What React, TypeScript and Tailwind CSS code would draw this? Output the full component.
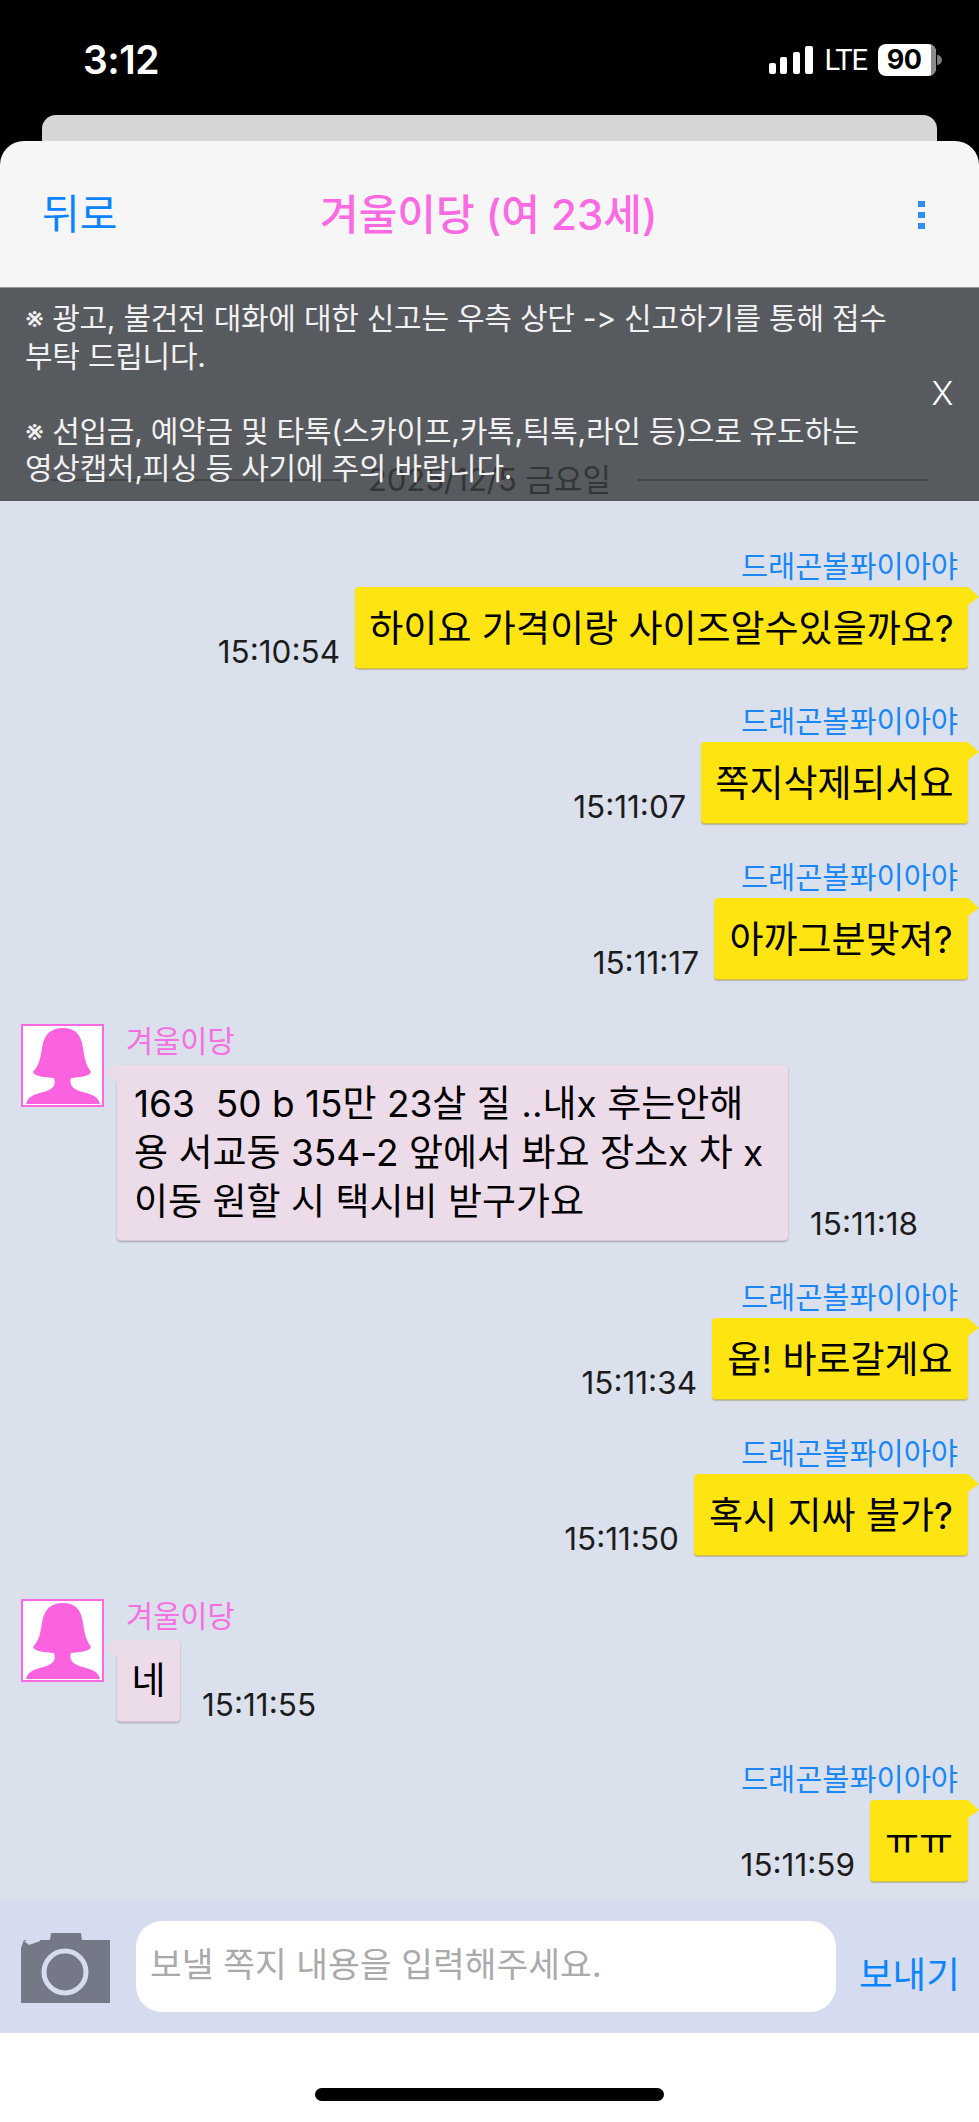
type Msg = { side: "me" | "her"; text: string; time: string; top: number; width: number };

const messages: Msg[] = [
  { side: "me", text: "하이요 가격이랑 사이즈알수있을까요?", time: "15:10:54", top: 47, width: 613 },
  { side: "me", text: "쪽지삭제되서요", time: "15:11:07", top: 31, width: 267 },
  { side: "me", text: "아까그분맞져?", time: "15:11:17", top: 32, width: 254 },
  { side: "her", text: "163  50 b 15만 23살 질 ..내x 후는안해\n용 서교동 354-2 앞에서 봐요 장소x 차 x\n이동 원할 시 택시비 받구가요", time: "15:11:18", top: 44, width: 671 },
  { side: "me", text: "옵! 바로갈게요", time: "15:11:34", top: 35, width: 256 },
  { side: "me", text: "혹시 지싸 불가?", time: "15:11:50", top: 32, width: 274 },
  { side: "her", text: "네", time: "15:11:55", top: 43, width: 63 },
  { side: "me", text: "ㅠㅠ", time: "15:11:59", top: 36, width: 98 },
];

function Avatar() {
  return (
    <div className="w-[83px] h-[83px] shrink-0 border-2 border-[#fb6ae2] bg-white">
      <svg viewBox="0 0 83 83" className="block -m-[2px]" style={{ width: 83, height: 83 }}>
        <path
          fill="#fb62e0"
          d="M42 4C30 4 23 10 21 24C19 38 17 42 12 48C14 53 24 53 33 54C35 60 33 64 26 67C16 70 7 71 5 80L79 80C77 71 68 70 58 67C51 64 48 60 50 54C58 53 68 53 70 48C66 42 64 38 62 24C60 10 54 4 42 4Z"
        />
      </svg>
    </div>
  );
}

function MyMessage({ msg }: { msg: Msg }) {
  return (
    <div style={{ marginTop: msg.top }}>
      <div className="h-[42px] leading-[42px] text-right pr-[21px] text-[29.5px] text-[#1a87f5]">드래곤볼퐈이아야</div>
      <div className="flex justify-end items-end gap-[15px] pr-[11px]">
        <span className="text-[31.5px] leading-[34px] text-[#1c1c1c]">{msg.time}</span>
        <div
          className="relative h-[82px] flex items-center justify-center rounded-[4px] bg-[#fee410] border-b border-[#cfbf45] text-[37px] text-black shadow-[0_1px_1px_rgba(120,110,40,0.35)]"
          style={{ width: msg.width }}
        >
          <span className="whitespace-pre pt-[3px]">{msg.text}</span>
          <svg viewBox="0 0 14 18" className="absolute top-0 -right-[11px] w-[14px] h-[18px]">
            <path d="M0 0L3 0L14 10L3 18L0 18Z" fill="#fee410" />
          </svg>
        </div>
      </div>
    </div>
  );
}

function HerMessage({ msg }: { msg: Msg }) {
  const long = msg.text.includes("\n");
  return (
    <div className="flex pl-[21px]" style={{ marginTop: msg.top }}>
      <Avatar />
      <div className="ml-[13px]">
        <div className="h-[34px] leading-[34px] pl-[9px] text-[29.5px] text-[#f66fe0]">겨울이당</div>
        <div className="flex items-end gap-[22px] mt-[7px]">
          <div
            className={
              "relative flex items-center rounded-[4px] bg-[#ecdbe8] border-b border-[#d3c3d3] text-[37px] leading-[49px] text-black whitespace-pre shadow-[0_1px_2px_rgba(90,80,100,0.4)] " +
              (long ? "h-[176px] pl-[17px]" : "h-[82px] justify-center")
            }
            style={{ width: msg.width }}
          >
            {msg.text}
            <svg viewBox="0 0 16 17" className="absolute top-0 -left-[11px] w-[16px] h-[17px]">
              <path d="M16 0L11 0L0 7L11 17L16 17Z" fill="#ecdbe8" />
            </svg>
          </div>
          <span className="text-[31.5px] leading-[34px] text-[#1c1c1c]">{msg.time}</span>
        </div>
      </div>
    </div>
  );
}

function StatusBar() {
  return (
    <div className="h-[115px] flex items-start justify-between text-white">
      <span className="ml-[83px] mt-[38px] text-[39px] leading-[44px] font-semibold tracking-[-0.5px]">3:12</span>
      <div className="flex items-center mt-[44px] mr-[37px] h-[32px]">
        <svg viewBox="0 0 44 28" className="w-[44px] h-[28px]" fill="white">
          <rect x="0" y="17" width="7" height="11" rx="2" />
          <rect x="11" y="11" width="7" height="17" rx="2" />
          <rect x="24" y="6" width="7" height="22" rx="2" />
          <rect x="36" y="0" width="8" height="28" rx="2" />
        </svg>
        <span className="ml-[11px] text-[29px] leading-[32px] font-['Roboto',sans-serif] tracking-[-1px]">LTE</span>
        <div className="ml-[11px] relative w-[58px] h-[32px] rounded-[8px] bg-white overflow-hidden flex items-center justify-center">
          <span className="text-black text-[27px] font-bold pr-[6px] tracking-[-0.5px]">90</span>
          <div className="absolute right-0 top-0 bottom-0 w-[5px] bg-[#8b8b8b]" />
        </div>
        <div className="ml-[1px] w-[5px] h-[10px] rounded-r-full bg-[#7e7e7e]" />
      </div>
    </div>
  );
}

function CameraIcon() {
  return (
    <svg viewBox="0 0 89 70" className="w-[89px] h-[70px] shrink-0">
      <path d="M0 15L3 7L16 7L29 7L30 0L60 0L61 7L89 7L89 70L0 70Z" fill="#757886" />
      <path d="M3 8L20 4L19 8L8 12Z" fill="#d6dcf0" />
      <ellipse cx="44" cy="39" rx="21" ry="21" fill="none" stroke="#d6dcf0" strokeWidth="5" />
    </svg>
  );
}

export default function App() {
  return (
    <div className="w-[979px] h-[2122px] overflow-hidden flex flex-col bg-black font-['Inter','Noto_Sans_CJK_KR',sans-serif]">
      <StatusBar />
      <div className="mx-[42px] h-[26px] rounded-t-[14px] bg-[#d6d6d6]" />

      <header className="h-[147px] rounded-t-[24px] bg-[#f6f6f6] border-b border-[#9a9a9a] flex items-center justify-between pl-[42px] pr-[54px] relative">
        <span className="text-[41px] text-[#0a84ff] mt-[2px]">뒤로</span>
        <span className="absolute left-[320px] top-[44px] text-[42px] leading-[60px] font-medium text-[#fb6ae2]">겨울이당 (여 23세)</span>
        <div className="flex flex-col gap-[5px] mt-[2px]">
          <span className="w-[7px] h-[6px] bg-[#2f8ff0]" />
          <span className="w-[7px] h-[6px] bg-[#2f8ff0]" />
          <span className="w-[7px] h-[6px] bg-[#2f8ff0]" />
        </div>
      </header>

      <main className="relative h-[1613px] bg-[#dae0ec] overflow-hidden">
        <div className="flex items-center pt-[174px] pl-[51px] pr-[51px] h-[210px]">
          <div className="flex-1 h-[2px] bg-[#999]" />
          <span className="mx-[27px] text-[31px] text-[#666] whitespace-pre">2025/12/5 금요일</span>
          <div className="flex-1 h-[2px] bg-[#999]" />
        </div>

        {messages.map((m, i) => (m.side === "me" ? <MyMessage key={i} msg={m} /> : <HerMessage key={i} msg={m} />))}

        {/* notice lies over the date row */}
        <div className="absolute top-0 left-0 right-0 h-[213px] bg-[#1f2123]/70 text-[#f1f1f1] text-[30px] leading-[37.5px] pl-[25px] pt-[12px] tracking-[-0.25px] whitespace-pre">
          {"※ 광고, 불건전 대화에 대한 신고는 우측 상단 -> 신고하기를 통해 접수\n부탁 드립니다.\n\n※ 선입금, 예약금 및 타톡(스카이프,카톡,틱톡,라인 등)으로 유도하는\n영상캡처,피싱 등 사기에 주의 바랍니다."}
          <span className="absolute right-[26px] top-[85px] text-[33px] leading-[40px] font-light text-white">X</span>
        </div>
      </main>

      <div className="h-[132px] bg-[#d6dcf0] flex items-start pl-[21px]">
        <div className="mt-[32px]">
          <CameraIcon />
        </div>
        <div className="ml-[26px] mt-[20px] w-[700px] h-[91px] rounded-[26px] bg-white flex items-center pl-[14px] pb-[4px] text-[34.5px] text-[#aaaaaa]">
          보낼 쪽지 내용을 입력해주세요.
        </div>
        <span className="ml-[23px] mt-[52px] text-[36.5px] leading-[44px] text-[#0a84ff]">보내기</span>
      </div>

      <div className="h-[89px] bg-white flex justify-center">
        <div className="mt-[55px] w-[349px] h-[13px] rounded-full bg-black" />
      </div>
    </div>
  );
}
